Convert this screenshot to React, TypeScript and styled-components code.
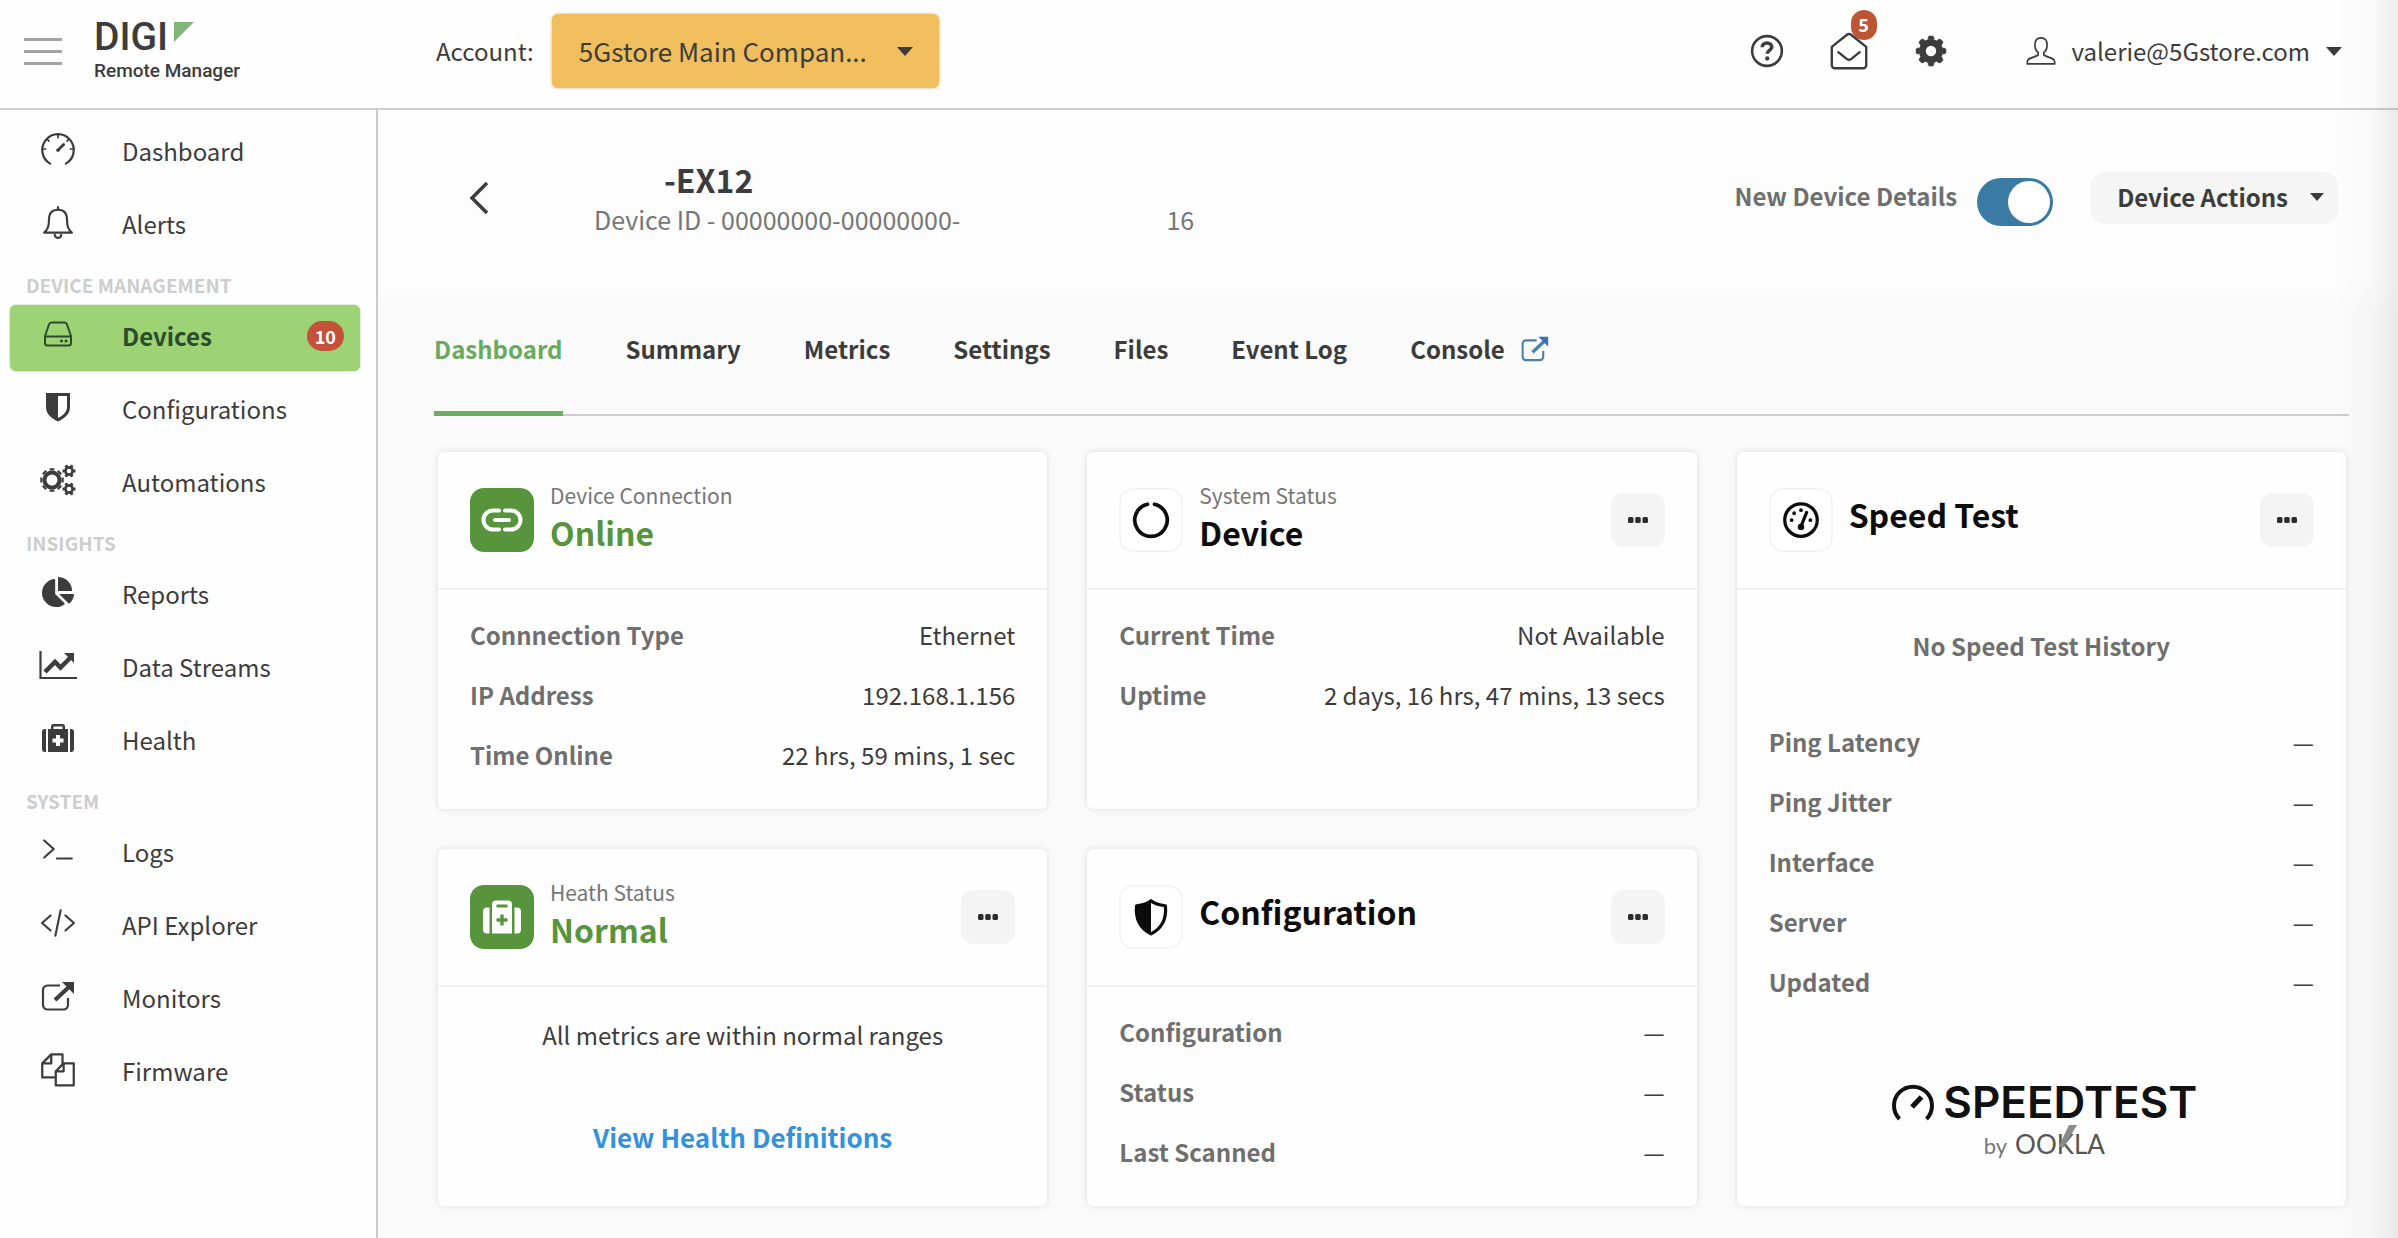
import React, { ReactNode } from "react";
import styled, { createGlobalStyle, css } from "styled-components";
import { FaChartPie } from "react-icons/fa";

const ink = "#3c3c3c";
const muted = "#6f6f6f";
const green = "#58943c";

const GlobalStyle = createGlobalStyle`
  *, *::before, *::after { box-sizing: border-box; }
  body {
    margin: 0;
    color: ${ink};
    background: #fafafa;
    font-family: "Noto Sans CJK SC", "Noto Sans", sans-serif;
    font-size: 24px;
    line-height: 36px;
  }
  button, select, input { font: inherit; color: inherit; }
  button { border: 0; padding: 0; background: none; cursor: pointer; }
  a { color: inherit; text-decoration: none; }
  h1, h2, p, dl, dd, dt, ul { margin: 0; padding: 0; }
  ul { list-style: none; }
  svg { display: block; flex: none; }
`;

const Page = styled.div`
  min-height: 100vh;
  display: flex;
  flex-direction: column;
  &::after {
    content: "";
    position: fixed;
    inset: 0 0 0 auto;
    width: 60px;
    pointer-events: none;
    background: linear-gradient(to left, rgba(0, 0, 0, 0.07), rgba(0, 0, 0, 0.02) 24px, transparent);
  }
`;

/* ---------- top bar ---------- */

const TopBar = styled.header`
  display: flex;
  align-items: center;
  height: 110px;
  padding: 0 56px 6px 24px;
  background: #fefefe;
  border-bottom: 2px solid #cfcfcf;
`;

const MenuButton = styled.button`
  display: flex;
  flex-direction: column;
  gap: 9px;
  width: 38px;
  margin-right: 32px;
`;

const MenuLine = styled.span`
  height: 3px;
  background: #a4a4a4;
`;

const Brand = styled.a`
  display: flex;
  flex-direction: column;
  width: 342px;
  padding-bottom: 6px;
  font-family: Roboto, sans-serif;
`;

const BrandMark = styled.span`
  display: flex;
  gap: 6px;
  font-size: 39px;
  font-weight: 500;
  line-height: 46px;
`;

const BrandName = styled.span`
  font-size: 19px;
  font-weight: 500;
  line-height: 22px;
`;

const AccountField = styled.div`
  display: flex;
  align-items: center;
  gap: 18px;
`;

const SelectBox = styled.div`
  display: grid;
  align-items: center;
  > * { grid-area: 1 / 1; }
  > svg { justify-self: end; margin-right: 26px; pointer-events: none; }
`;

const AccountSelect = styled.select`
  appearance: none;
  width: 387px;
  height: 74px;
  padding: 0 60px 0 27px;
  border: 0;
  border-radius: 6px;
  background: #f0be5c;
  box-shadow: 0 0 3px rgba(190, 140, 50, 0.7);
  font-size: 26px;
`;

const TopActions = styled.div`
  display: flex;
  align-items: center;
  gap: 46px;
  margin-left: auto;
`;

const IconButton = styled.button`
  position: relative;
  display: flex;
`;

const MailBadge = styled.span`
  position: absolute;
  top: -22px;
  right: -9px;
  width: 26px;
  height: 30px;
  border-radius: 13px;
  background: #bd5534;
  color: #fff;
  font-size: 18px;
  font-weight: 700;
  line-height: 28px;
`;

const UserButton = styled.button`
  display: flex;
  align-items: center;
  gap: 16px;
  margin-left: 32px;
`;

/* ---------- sidebar ---------- */

const Body = styled.div`
  display: flex;
  flex: 1;
`;

const Sidebar = styled.nav`
  width: 378px;
  flex: none;
  padding: 10px 16px 24px 10px;
  background: #fefefe;
  border-right: 2px solid #cbcbcb;
`;

const NavList = styled.ul`
  display: flex;
  flex-direction: column;
  gap: 7px;
  margin-bottom: 7px;
`;

const NavHeading = styled.h2`
  padding: 6px 16px 0;
  margin-bottom: 7px;
  color: #cdcdcd;
  font-size: 19px;
  font-weight: 700;
  line-height: 26px;
`;

const NavLink = styled.a<{ $active?: boolean }>`
  display: grid;
  grid-template-columns: 40px 1fr auto;
  column-gap: 44px;
  align-items: center;
  height: 66px;
  padding: 0 16px 4px 28px;
  border-radius: 6px;
  > svg { justify-self: center; margin-bottom: 4px; }
  ${(p) =>
    p.$active &&
    css`
      background: #9dd275;
      box-shadow: 0 0 2px #8ec467;
      color: #2c4a2c;
      font-weight: 700;
    `}
`;

const CountBadge = styled.span`
  padding: 0 8px;
  border-radius: 15px;
  background: #c4513a;
  color: #fff;
  font-size: 18px;
  font-weight: 700;
  line-height: 30px;
`;

/* ---------- device header ---------- */

const Main = styled.main`
  flex: 1;
  min-width: 0;
  background: linear-gradient(#fdfdfd 170px, #fafafa 200px);
`;

const DeviceHeader = styled.section`
  display: flex;
  align-items: center;
  height: 176px;
  padding: 0 60px 0 90px;
`;

const BackButton = styled.button`
  display: flex;
  width: 126px;
`;

const DeviceTitle = styled.div`
  padding-top: 4px;
`;

const DeviceName = styled.h1`
  padding-left: 70px;
  font-size: 32px;
  font-weight: 700;
  line-height: 38px;
`;

const DeviceId = styled.p`
  display: flex;
  gap: 206px;
  color: #767676;
  font-size: 25px;
  line-height: 42px;
`;

const DeviceTools = styled.div`
  display: flex;
  align-items: center;
  gap: 38px;
  margin-left: auto;
`;

const ToggleLabel = styled.label`
  display: flex;
  align-items: flex-start;
  gap: 20px;
  color: ${muted};
  font-weight: 700;
  line-height: 52px;
`;

const Toggle = styled.input`
  appearance: none;
  display: flex;
  justify-content: flex-end;
  width: 76px;
  height: 48px;
  margin: 8px 0 0;
  padding: 3px;
  border-radius: 24px;
  background: #3b7ba3;
  cursor: pointer;
  &::before {
    content: "";
    width: 42px;
    height: 42px;
    border-radius: 50%;
    background: #fff;
  }
`;

const ActionsButton = styled.button`
  display: flex;
  align-items: center;
  gap: 22px;
  height: 52px;
  padding: 0 14px 2px 26px;
  border-radius: 14px;
  background: #f5f5f5;
  font-weight: 700;
`;

/* ---------- tabs ---------- */

const Tabs = styled.nav`
  display: flex;
  gap: 63px;
  height: 130px;
  margin: 0 49px 0 56px;
  border-bottom: 2px solid #cdcdcd;
`;

const Tab = styled.a<{ $active?: boolean }>`
  display: flex;
  align-items: center;
  gap: 16px;
  margin-bottom: -2px;
  border-bottom: 5px solid ${(p) => (p.$active ? "#6aae5f" : "transparent")};
  color: ${(p) => (p.$active ? "#68ab5e" : ink)};
  font-weight: 700;
`;

/* ---------- cards ---------- */

const CardGrid = styled.div`
  display: grid;
  grid-template-columns: repeat(3, 1fr);
  gap: 40px;
  padding: 36px 52px 32px 60px;
`;

const Card = styled.section<{ $tall?: boolean }>`
  display: flex;
  flex-direction: column;
  border-radius: 6px;
  background: #fefefe;
  box-shadow: 0 0 6px rgba(0, 0, 0, 0.12);
  grid-row: ${(p) => (p.$tall ? "span 2" : "auto")};
  grid-column: ${(p) => (p.$tall ? 3 : "auto")};
`;

const CardHeader = styled.header`
  display: flex;
  align-items: center;
  gap: 16px;
  height: 138px;
  padding: 0 32px;
  border-bottom: 2px solid #f1f1f1;
`;

const Tile = styled.span<{ $filled?: boolean }>`
  display: grid;
  place-items: center;
  width: 64px;
  height: 64px;
  border-radius: 14px;
  border: 2px solid ${(p) => (p.$filled ? green : "#f4f4f4")};
  background: ${(p) => (p.$filled ? green : "#fff")};
  color: ${(p) => (p.$filled ? "#fff" : "#0c0c0c")};
`;

const CardTitles = styled.div<{ $single?: boolean }>`
  flex: 1;
  display: flex;
  flex-direction: column;
  padding-bottom: ${(p) => (p.$single ? "12px" : "8px")};
`;

const Eyebrow = styled.span`
  color: #757575;
  font-size: 21px;
  line-height: 32px;
`;

const CardTitle = styled.h2<{ $good?: boolean }>`
  color: ${(p) => (p.$good ? green : "#0c0c0c")};
  font-size: 32px;
  font-weight: 700;
  line-height: 42px;
`;

const MoreButton = styled.button`
  display: grid;
  place-items: center;
  width: 54px;
  height: 54px;
  border-radius: 12px;
  background: #f4f4f4;
`;

const Rows = styled.dl`
  display: flex;
  flex-direction: column;
  gap: 24px;
  padding: 27px 32px 36px;
`;

const Row = styled.div`
  display: flex;
  justify-content: space-between;
`;

const RowLabel = styled.dt`
  color: ${muted};
  font-weight: 700;
`;

const CardNote = styled.div`
  display: flex;
  flex-direction: column;
  align-items: center;
  gap: 66px;
  padding: 30px 32px;
`;

const HealthLink = styled.a`
  color: #3392dc;
  font-size: 26px;
  font-weight: 700;
`;

const EmptyNote = styled.p`
  padding: 38px 0 33px;
  color: ${muted};
  font-weight: 700;
  text-align: center;
`;

const SpeedLogo = styled.div`
  display: flex;
  flex-direction: column;
  align-items: center;
  margin: auto 0 40px;
  padding-left: 6px;
  color: #111;
`;

const SpeedWord = styled.div`
  display: flex;
  align-items: center;
  gap: 8px;
  font-family: Inter, sans-serif;
  font-size: 44px;
  font-weight: 600;
  line-height: 44px;
`;

const Byline = styled.div`
  display: flex;
  align-items: baseline;
  gap: 8px;
  color: #555;
  font-family: Lato, sans-serif;
  font-size: 26px;
  line-height: 40px;
`;

const ByWord = styled.span`
  color: #757575;
  font-size: 22px;
`;

const OoklaWord = styled.span`
  position: relative;
  > svg { position: absolute; left: 42px; top: 1px; }
`;

/* ---------- drawings ---------- */

type StrokeProps = { size: number; w?: number; box?: number; children: ReactNode };

const Stroke = ({ size, w = 2, box = 32, children }: StrokeProps) => (
  <svg width={size} height={size} viewBox={`0 0 ${box} ${box}`} fill="none" stroke="currentColor" strokeWidth={w} strokeLinecap="round" strokeLinejoin="round" aria-hidden="true">
    {children}
  </svg>
);

const Caret = ({ width }: { width: number }) => (
  <svg width={width} height={width / 2 + 1} viewBox="0 0 16 9" fill="currentColor" aria-hidden="true">
    <path d="M0 0h16L8 9z" />
  </svg>
);

const GaugeIcon = () => (
  <Stroke size={36}>
    <path d="M9 29a14 14 0 1 1 14 0" />
    <path d="M16 3v3M3 16h2M29 16h-2M6.500 7.500l1.500 1.500M25.500 7.500l-1.500 1.500" strokeWidth={1.500} />
    <path d="M16 17l5-5" strokeWidth={2.500} />
    <circle cx="16" cy="17" r="1.500" fill="currentColor" stroke="none" />
  </Stroke>
);

const BellIcon = () => (
  <Stroke size={34}>
    <path d="M3 26c3-3 4.500-5 4.500-12 0-6 3-9.500 8.500-9.500s8.500 3.500 8.500 9.500c0 7 1.500 9 4.500 12z" />
    <path d="M16 2v2M13 28a3 3 0 0 0 6 0" />
  </Stroke>
);

const DriveIcon = () => (
  <Stroke size={32}>
    <path d="M3 18L7 6.500C7.500 5 8 4.500 9.500 4.500h13c1.500 0 2 .5 2.500 2L29 18v7a2.500 2.500 0 0 1-2.500 2.500h-21A2.500 2.500 0 0 1 3 25zM3 18.500h26" />
    <path d="M19.500 23h.1M24 23h.1" strokeWidth={3} />
  </Stroke>
);

const HalfShieldIcon = () => (
  <svg width="26" height="30" viewBox="0 0 26 30" fill="currentColor" aria-hidden="true">
    <path d="M1 1h24v14c0 7-5 11-12 14.500C6 26 1 22 1 15zM13 4v22c5-2.500 9-6 9-11V4z" fillRule="evenodd" />
  </svg>
);

const gearTeeth = (cx: number, cy: number, r: number, n: number) =>
  Array.from({ length: n }, (_, i) => {
    const a = (i * 2 * Math.PI) / n;
    return `M${cx + r * Math.cos(a)} ${cy + r * Math.sin(a)}L${cx + (r + 2.2) * Math.cos(a)} ${cy + (r + 2.2) * Math.sin(a)}`;
  }).join("");

const GearsIcon = () => (
  <svg width="38" height="34" viewBox="0 0 38 34" fill="none" stroke="currentColor" aria-hidden="true">
    <circle cx="13" cy="17" r="7.500" strokeWidth="4" />
    <path d={gearTeeth(13, 17, 9.500, 8)} strokeWidth="4.800" />
    <circle cx="30" cy="8" r="3.600" strokeWidth="2.600" />
    <path d={gearTeeth(30, 8, 4.300, 6)} strokeWidth="3" />
    <circle cx="30" cy="26" r="3.600" strokeWidth="2.600" />
    <path d={gearTeeth(30, 26, 4.300, 6)} strokeWidth="3" />
  </svg>
);

const TrendIcon = () => (
  <svg width="38" height="30" viewBox="0 0 38 30" fill="none" stroke="currentColor" aria-hidden="true">
    <path d="M1.500 1v27H38" strokeWidth="2.200" />
    <path d="M6 22l10-10 5.500 5.500L32 7" strokeWidth="4.500" />
    <path d="M25 3h10v10z" fill="currentColor" stroke="none" />
  </svg>
);

const KitIcon = ({ size, cross }: { size: number; cross: string }) => (
  <svg width={size} height={size} viewBox="0 0 32 32" fill="currentColor" aria-hidden="true">
    <path d="M4 7v23H3a3 3 0 0 1-3-3V10a3 3 0 0 1 3-3zM28 7v23h1a3 3 0 0 0 3-3V10a3 3 0 0 0-3-3z" />
    <path d="M6 7h3V4.500A2.500 2.500 0 0 1 11.500 2h9A2.500 2.500 0 0 1 23 4.500V7h3v23H6zM11.500 4.500V7h9V4.500z" fillRule="evenodd" />
    <path d="M14 13h4v3.500h3.500v4H18V24h-4v-3.500h-3.500v-4H14z" fill={cross} />
  </svg>
);

const KitBadgeIcon = () => (
  <svg width="38" height="38" viewBox="0 0 38 38" fill="currentColor" aria-hidden="true">
    <path d="M6.500 9.500v26H4a4 4 0 0 1-4-4v-18a4 4 0 0 1 4-4zM31.500 9.500v26H34a4 4 0 0 0 4-4v-18a4 4 0 0 0-4-4z" />
    <path d="M9 35.500V6.500a4 4 0 0 1 4-4h12a4 4 0 0 1 4 4v29zM13.500 6.500v3h11v-3zM17.300 16.500v3.800h-3.800v3.400h3.800v3.800h3.400v-3.800h3.800v-3.400h-3.800v-3.800z" fillRule="evenodd" />
  </svg>
);

const PromptIcon = () => (
  <Stroke size={34}>
    <path d="M3 7l9 8-9 8" />
    <path d="M15 24h14" />
  </Stroke>
);

const CodeIcon = () => (
  <Stroke size={34}>
    <path d="M9 9l-8 7 8 7M23 9l8 7-8 7M18.500 4l-5 24" />
  </Stroke>
);

const ExternalIcon = ({ size }: { size: number }) => (
  <svg width={size} height={size} viewBox="0 0 34 32" fill="none" stroke="currentColor" aria-hidden="true">
    <path d="M19 5.500H6.500a4.500 4.500 0 0 0-4.500 4.500v15a4.500 4.500 0 0 0 4.500 4.500h16a4.500 4.500 0 0 0 4.500-4.500v-7" strokeWidth="2.200" />
    <path d="M14 20L29 6" strokeWidth="4" />
    <path d="M21 2h12v12z" fill="currentColor" stroke="none" />
  </svg>
);

const FilesIcon = () => (
  <Stroke size={36}>
    <path d="M12.500 23.500H2V11l8-8h10v8M10 3v8H2" />
    <path d="M30 11v19.500H14V18l7-7zM21 11v7h-7" />
  </Stroke>
);

const HelpIcon = () => (
  <Stroke size={34} w={2.4}>
    <circle cx="16" cy="16" r="14" />
    <path d="M11.500 12.500c0-2.600 2-4 4.500-4s4.500 1.600 4.500 3.800c0 3-4.300 3.200-4.300 6.200" strokeWidth={3.400} strokeLinecap="butt" />
    <path d="M16.200 23v.1" strokeWidth={4} />
  </Stroke>
);

const MailIcon = () => (
  <Stroke size={38} w={2}>
    <path d="M1.500 12.500L14 2.500q2-1.500 4 0L30.500 12.500V28a2.500 2.500 0 0 1-2.500 2.500H4A2.500 2.500 0 0 1 1.500 28z" />
    <path d="M7 17l7.500 6q1.500 1 3 0L25 17" />
  </Stroke>
);

const GearIcon = () => (
  <svg width="34" height="34" viewBox="0 0 34 34" fill="none" stroke="currentColor" aria-hidden="true">
    <circle cx="17" cy="17" r="8.600" strokeWidth="6.800" />
    <path d={gearTeeth(17, 17, 11.500, 8)} strokeWidth="6.500" />
    <path d={gearTeeth(17, 17, 13, 8)} strokeWidth="5" />
  </svg>
);

const UserIcon = () => (
  <Stroke size={30} w={1.8}>
    <path d="M16 2c-4.500 0-6.500 3-6.500 7.500 0 3.500 1.500 6.500 3.500 8v2.500c-1 2-9 3-11 5.500-.7 1-.7 3-.7 4.200h29.400c0-1.200 0-3.200-.7-4.200-2-2.500-10-3.500-11-5.500v-2.500c2-1.500 3.500-4.500 3.500-8C22.500 5 20.500 2 16 2z" />
  </Stroke>
);

const BackIcon = () => (
  <svg width="22" height="34" viewBox="0 0 22 34" fill="none" stroke="currentColor" strokeWidth="3.500" aria-hidden="true">
    <path d="M19 2L4 17l15 15" />
  </svg>
);

const LinkIcon = () => (
  <svg width="42" height="24" viewBox="0 0 42 24" fill="none" stroke="currentColor" strokeWidth="4" strokeLinecap="round" aria-hidden="true">
    <path d="M18 2.500h-6a9.500 9.500 0 0 0 0 19h6M24 2.500h6a9.500 9.500 0 0 1 0 19h-6M14 12h14" />
  </svg>
);

const RingIcon = () => (
  <Stroke size={40} w={3}>
    <path d="M13.200 3.400a13 13 0 1 0 5.600 0" />
  </Stroke>
);

const SpeedIcon = () => (
  <Stroke size={40} w={2.6}>
    <circle cx="16" cy="16" r="13" />
    <path d="M16 21l4.500-11" />
    <circle cx="16" cy="21.500" r="2.600" fill="currentColor" stroke="none" />
    <path d="M16 8v.1M10.500 10.500v.1M8.500 16v.1M23.500 16v.1" strokeWidth={3} />
  </Stroke>
);

const ShieldIcon = () => (
  <Stroke size={40} w={2.6}>
    <path d="M16 3c3 2.500 7 3.500 11.500 4C28.500 17 25 25 16 29.500 7 25 3.500 17 4.500 7 9 6.500 13 5.500 16 3z" />
    <path d="M16 3v26.500C7 25 3.500 17 4.500 7 9 6.500 13 5.500 16 3z" fill="currentColor" stroke="none" />
  </Stroke>
);

const DotsIcon = () => (
  <svg width="20" height="6" viewBox="0 0 20 6" fill="#2c2c2c" aria-hidden="true">
    <rect width="5.500" height="6" rx="1.500" />
    <rect x="7.200" width="5.500" height="6" rx="1.500" />
    <rect x="14.500" width="5.500" height="6" rx="1.500" />
  </svg>
);

const SpeedtestMark = () => (
  <svg width="44" height="38" viewBox="0 0 44 38" fill="none" stroke="currentColor" strokeWidth="4" aria-hidden="true">
    <path d="M8.500 36a19 19 0 1 1 27 0" />
    <path d="M21 24l9.500-10" strokeWidth="5" />
  </svg>
);

/* ---------- screen ---------- */

type Item = { label: string; icon: ReactNode; count?: number };

const groups: { heading?: string; items: Item[] }[] = [
  {
    items: [
      { label: "Dashboard", icon: <GaugeIcon /> },
      { label: "Alerts", icon: <BellIcon /> },
    ],
  },
  {
    heading: "DEVICE MANAGEMENT",
    items: [
      { label: "Devices", icon: <DriveIcon />, count: 10 },
      { label: "Configurations", icon: <HalfShieldIcon /> },
      { label: "Automations", icon: <GearsIcon /> },
    ],
  },
  {
    heading: "INSIGHTS",
    items: [
      { label: "Reports", icon: <FaChartPie size={32} /> },
      { label: "Data Streams", icon: <TrendIcon /> },
      { label: "Health", icon: <KitIcon size={32} cross="#fefefe" /> },
    ],
  },
  {
    heading: "SYSTEM",
    items: [
      { label: "Logs", icon: <PromptIcon /> },
      { label: "API Explorer", icon: <CodeIcon /> },
      { label: "Monitors", icon: <ExternalIcon size={34} /> },
      { label: "Firmware", icon: <FilesIcon /> },
    ],
  },
];

const tabs = ["Dashboard", "Summary", "Metrics", "Settings", "Files", "Event Log", "Console"];

const More = ({ of }: { of: string }) => (
  <MoreButton aria-label={`${of} options`}>
    <DotsIcon />
  </MoreButton>
);

const DataRows = ({ rows }: { rows: [string, string][] }) => (
  <Rows>
    {rows.map(([label, value]) => (
      <Row key={label}>
        <RowLabel>{label}</RowLabel>
        <dd>{value}</dd>
      </Row>
    ))}
  </Rows>
);

export default function App() {
  return (
    <Page>
      <GlobalStyle />
      <TopBar>
        <MenuButton aria-label="Toggle menu">
          <MenuLine />
          <MenuLine />
          <MenuLine />
        </MenuButton>
        <Brand href="#">
          <BrandMark>
            DIGI
            <svg width="20" height="28" viewBox="0 0 20 28" aria-hidden="true">
              <path d="M0 8h20L0 28z" fill="#82b57a" />
            </svg>
          </BrandMark>
          <BrandName>Remote Manager</BrandName>
        </Brand>
        <AccountField>
          <label htmlFor="account">Account:</label>
          <SelectBox>
            <AccountSelect id="account">
              <option>5Gstore Main Compan...</option>
            </AccountSelect>
            <Caret width={16} />
          </SelectBox>
        </AccountField>
        <TopActions>
          <IconButton aria-label="Help">
            <HelpIcon />
          </IconButton>
          <IconButton aria-label="Messages">
            <MailIcon />
            <MailBadge>5</MailBadge>
          </IconButton>
          <IconButton aria-label="Settings">
            <GearIcon />
          </IconButton>
          <UserButton>
            <UserIcon />
            valerie@5Gstore.com
            <Caret width={16} />
          </UserButton>
        </TopActions>
      </TopBar>

      <Body>
        <Sidebar aria-label="Main">
          {groups.map((group, i) => (
            <React.Fragment key={i}>
              {group.heading && <NavHeading>{group.heading}</NavHeading>}
              <NavList>
                {group.items.map((item) => (
                  <li key={item.label}>
                    <NavLink href="#" $active={item.label === "Devices"}>
                      {item.icon}
                      <span>{item.label}</span>
                      {item.count && <CountBadge>{item.count}</CountBadge>}
                    </NavLink>
                  </li>
                ))}
              </NavList>
            </React.Fragment>
          ))}
        </Sidebar>

        <Main>
          <DeviceHeader>
            <BackButton aria-label="Back">
              <BackIcon />
            </BackButton>
            <DeviceTitle>
              <DeviceName>-EX12</DeviceName>
              <DeviceId>
                <span>Device ID - 00000000-00000000-</span>
                <span>16</span>
              </DeviceId>
            </DeviceTitle>
            <DeviceTools>
              <ToggleLabel>
                New Device Details
                <Toggle type="checkbox" role="switch" defaultChecked />
              </ToggleLabel>
              <ActionsButton>
                Device Actions
                <Caret width={14} />
              </ActionsButton>
            </DeviceTools>
          </DeviceHeader>

          <Tabs aria-label="Device">
            {tabs.map((tab) => (
              <Tab key={tab} href="#" $active={tab === "Dashboard"}>
                {tab}
                {tab === "Console" && (
                  <svg width="28" height="28" viewBox="0 0 34 32" fill="none" stroke="#4a7fa6" aria-hidden="true">
                    <path d="M19 5.500H6a4 4 0 0 0-4 4v16a4 4 0 0 0 4 4h17a4 4 0 0 0 4-4v-7" strokeWidth="2.500" />
                    <path d="M14 20L29 6" strokeWidth="4" />
                    <path d="M21 1h12v12z" fill="#3e72ad" stroke="none" />
                  </svg>
                )}
              </Tab>
            ))}
          </Tabs>

          <CardGrid>
            <Card>
              <CardHeader>
                <Tile $filled>
                  <LinkIcon />
                </Tile>
                <CardTitles>
                  <Eyebrow>Device Connection</Eyebrow>
                  <CardTitle $good>Online</CardTitle>
                </CardTitles>
              </CardHeader>
              <DataRows
                rows={[
                  ["Connnection Type", "Ethernet"],
                  ["IP Address", "192.168.1.156"],
                  ["Time Online", "22 hrs, 59 mins, 1 sec"],
                ]}
              />
            </Card>

            <Card>
              <CardHeader>
                <Tile>
                  <RingIcon />
                </Tile>
                <CardTitles>
                  <Eyebrow>System Status</Eyebrow>
                  <CardTitle>Device</CardTitle>
                </CardTitles>
                <More of="System status" />
              </CardHeader>
              <DataRows
                rows={[
                  ["Current Time", "Not Available"],
                  ["Uptime", "2 days, 16 hrs, 47 mins, 13 secs"],
                ]}
              />
            </Card>

            <Card $tall>
              <CardHeader>
                <Tile>
                  <SpeedIcon />
                </Tile>
                <CardTitles $single>
                  <CardTitle>Speed Test</CardTitle>
                </CardTitles>
                <More of="Speed test" />
              </CardHeader>
              <EmptyNote>No Speed Test History</EmptyNote>
              <DataRows
                rows={[
                  ["Ping Latency", "—"],
                  ["Ping Jitter", "—"],
                  ["Interface", "—"],
                  ["Server", "—"],
                  ["Updated", "—"],
                ]}
              />
              <SpeedLogo>
                <SpeedWord>
                  <SpeedtestMark />
                  SPEEDTEST
                </SpeedWord>
                <Byline>
                  <ByWord>by</ByWord>
                  <OoklaWord>
                    OOKLA
                    <svg width="20" height="26" viewBox="0 0 20 26" aria-hidden="true">
                      <path d="M2 21L12 0h8L6 23z" fill="#8a8a8a" />
                    </svg>
                  </OoklaWord>
                </Byline>
              </SpeedLogo>
            </Card>

            <Card>
              <CardHeader>
                <Tile $filled>
                  <KitBadgeIcon />
                </Tile>
                <CardTitles>
                  <Eyebrow>Heath Status</Eyebrow>
                  <CardTitle $good>Normal</CardTitle>
                </CardTitles>
                <More of="Health status" />
              </CardHeader>
              <CardNote>
                <p>All metrics are within normal ranges</p>
                <HealthLink href="#">View Health Definitions</HealthLink>
              </CardNote>
            </Card>

            <Card>
              <CardHeader>
                <Tile>
                  <ShieldIcon />
                </Tile>
                <CardTitles $single>
                  <CardTitle>Configuration</CardTitle>
                </CardTitles>
                <More of="Configuration" />
              </CardHeader>
              <DataRows
                rows={[
                  ["Configuration", "—"],
                  ["Status", "—"],
                  ["Last Scanned", "—"],
                ]}
              />
            </Card>
          </CardGrid>
        </Main>
      </Body>
    </Page>
  );
}
